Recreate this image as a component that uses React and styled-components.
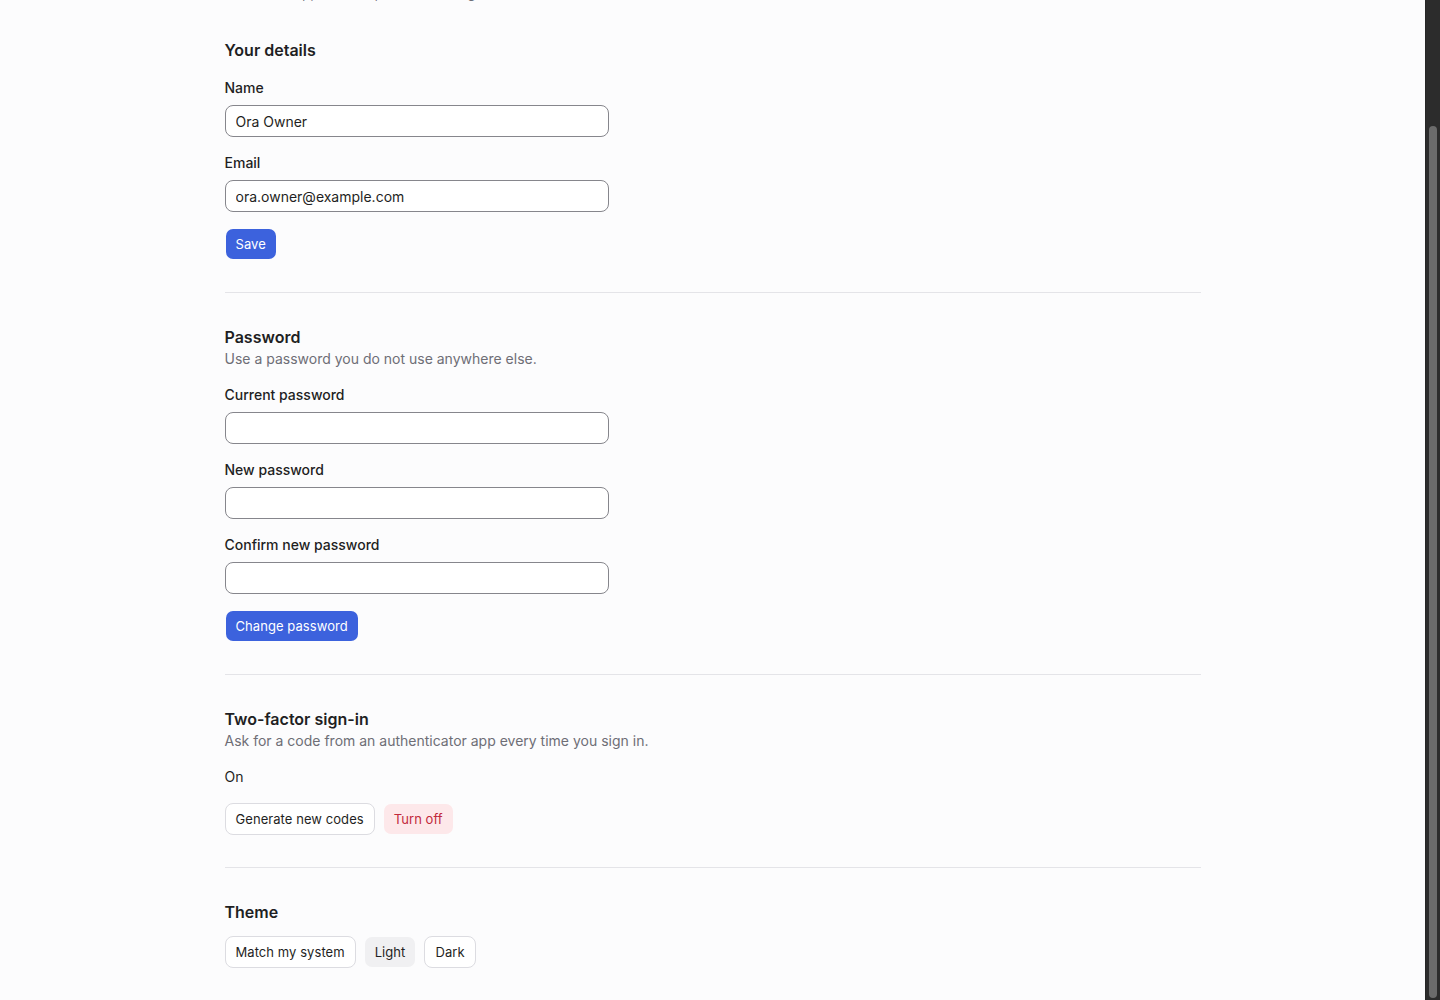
import React, { useLayoutEffect, useRef, useState } from 'react';
import styled, { createGlobalStyle } from 'styled-components';

const GlobalStyle = createGlobalStyle`
    html, body {
        margin: 0;
        padding: 0;
        height: 100%;
        overflow: hidden;
    }
    body {
        font-family: Inter, "Noto Sans", "Liberation Sans", sans-serif;
        color: #1f1f23;
        background: #fcfcfd;
    }
    * {
        box-sizing: border-box;
    }
`

const Shell = styled.div`
    display: flex;
    height: 100vh;
`

const Scroller = styled.div`
    flex: 1;
    overflow-y: auto;
    background: #fcfcfd;
    scrollbar-width: none;

    &::-webkit-scrollbar {
        display: none;
    }
`

// the window's scroll track, drawn next to the content
const ScrollTrack = styled.div`
    position: relative;
    flex: 0 0 15px;
    background: #2c2c2c;
    border-left: 1px solid #262626;
`

const ScrollThumb = styled.div`
    position: absolute;
    left: 3px;
    right: 3px;
    background: #6b6b6b;
    border-radius: 5px;
`

const Page = styled.main`
    max-width: 976px;
    margin: 0 auto;
    padding: 77px 0 0;
`

const PageHeader = styled.header`
    margin-bottom: 35px;
`

const PageTitle = styled.h1`
    margin: 0 0 8px;
    font-size: 28px;
    line-height: 40px;
    font-weight: 600;
    letter-spacing: -0.01em;
`

const Muted = styled.p`
    margin: 0;
    font-size: 14px;
    line-height: 20px;
    color: #6e6e76;
`

const Section = styled.section`
    display: flex;
    flex-direction: column;
    align-items: flex-start;
    padding: ${(p) => (p.first ? '0 0 32px' : '32px 0')};
    border-bottom: ${(p) => (p.last ? 'none' : '1px solid #e4e4e8')};
`

const SectionHead = styled.div`
    margin-bottom: ${(p) => (p.tight ? '12px' : '16px')};
`

const SectionTitle = styled.h2`
    margin: 0;
    font-size: 16px;
    line-height: 24px;
    font-weight: 600;
    color: #1f1f23;
`

const Fields = styled.div`
    display: flex;
    flex-direction: column;
    gap: 16px;
    width: 384px;
`

const Field = styled.label`
    display: flex;
    flex-direction: column;
    gap: 7px;
`

const LabelText = styled.span`
    font-size: 14px;
    line-height: 20px;
    font-weight: 500;
    color: #1f1f23;
`

const Input = styled.input`
    width: 100%;
    height: 32px;
    padding: 0 10px;
    border: 1px solid #86868c;
    border-radius: 8px;
    background: #ffffff;
    font-family: inherit;
    font-size: 14px;
    color: #1f1f23;
    outline: none;
`

const Actions = styled.div`
    display: flex;
    gap: 8px;
    margin-top: ${(p) => p.top || '16px'};
`

const StatusText = styled.div`
    font-size: 14px;
    line-height: 20px;
    color: #1f1f23;
`

const variants = {
    primary: { bg: '#3c62dd', color: '#ffffff', border: 'transparent' },
    secondary: { bg: '#ffffff', color: '#1f1f23', border: '#dcdce1' },
    danger: { bg: '#fde8ea', color: '#c22a3b', border: 'transparent' },
    selected: { bg: '#f0f0f2', color: '#1f1f23', border: 'transparent' }
}

const Button = styled.button`
    height: 32px;
    padding: 0 10px;
    border: 1px solid ${(p) => variants[p.variant].border};
    border-radius: 8px;
    background: ${(p) => variants[p.variant].bg};
    background-clip: padding-box;
    color: ${(p) => variants[p.variant].color};
    font-family: inherit;
    font-size: 13px;
    line-height: 20px;
    font-weight: 400;
    letter-spacing: 0.005em;
    cursor: pointer;
`

const PasswordField = ({ label }) => (
    <Field>
        <LabelText>{label}</LabelText>
        <Input type="password" />
    </Field>
)

const App = () => {
    const scrollRef = useRef(null);
    const [thumb, setThumb] = useState({ top: 0, height: 0 });

    const updateThumb = () => {
        const el = scrollRef.current;
        if (!el) return;
        const ratio = el.clientHeight / el.scrollHeight;
        setThumb({
            top: el.scrollTop * ratio,
            height: el.clientHeight * ratio
        });
    };

    useLayoutEffect(() => {
        if (scrollRef.current) {
            scrollRef.current.scrollTop = scrollRef.current.scrollHeight;
        }
        updateThumb();
    }, []);

    return (
        <>
            <GlobalStyle />
            <Shell>
                <Scroller ref={scrollRef} onScroll={updateThumb}>
                    <Page>
                        <PageHeader>
                            <PageTitle>Account settings</PageTitle>
                            <Muted>Your details, password, two-factor sign-in and theme.</Muted>
                        </PageHeader>

                        <Section first>
                            <SectionHead>
                                <SectionTitle>Your details</SectionTitle>
                            </SectionHead>
                            <Fields>
                                <Field>
                                    <LabelText>Name</LabelText>
                                    <Input defaultValue="Ora Owner" />
                                </Field>
                                <Field>
                                    <LabelText>Email</LabelText>
                                    <Input type="email" defaultValue="ora.owner@example.com" />
                                </Field>
                            </Fields>
                            <Actions>
                                <Button variant="primary">Save</Button>
                            </Actions>
                        </Section>

                        <Section>
                            <SectionHead>
                                <SectionTitle>Password</SectionTitle>
                                <Muted>Use a password you do not use anywhere else.</Muted>
                            </SectionHead>
                            <Fields>
                                <PasswordField label="Current password" />
                                <PasswordField label="New password" />
                                <PasswordField label="Confirm new password" />
                            </Fields>
                            <Actions>
                                <Button variant="primary">Change password</Button>
                            </Actions>
                        </Section>

                        <Section>
                            <SectionHead>
                                <SectionTitle>Two-factor sign-in</SectionTitle>
                                <Muted>Ask for a code from an authenticator app every time you sign in.</Muted>
                            </SectionHead>
                            <StatusText>On</StatusText>
                            <Actions>
                                <Button variant="secondary">Generate new codes</Button>
                                <Button variant="danger">Turn off</Button>
                            </Actions>
                        </Section>

                        <Section last>
                            <SectionHead tight>
                                <SectionTitle>Theme</SectionTitle>
                            </SectionHead>
                            <Actions top="0">
                                <Button variant="secondary">Match my system</Button>
                                <Button variant="selected">Light</Button>
                                <Button variant="secondary">Dark</Button>
                            </Actions>
                        </Section>
                    </Page>
                </Scroller>
                <ScrollTrack>
                    <ScrollThumb style={{ top: thumb.top + 2, height: thumb.height - 4 }} />
                </ScrollTrack>
            </Shell>
        </>
    );
};

export default App;
